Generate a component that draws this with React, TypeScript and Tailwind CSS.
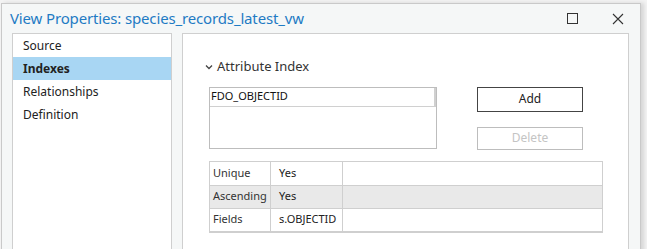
export default function App() {
  const font = { fontFamily: '"Noto Sans", "Open Sans", sans-serif' }
  const items = ['Source', 'Indexes', 'Relationships', 'Definition']
  const rows = [
    { label: 'Unique', value: 'Yes', alt: false },
    { label: 'Ascending', value: 'Yes', alt: true },
    { label: 'Fields', value: 's.OBJECTID', alt: false },
  ]

  return (
    <div className="h-[249px] w-[647px] overflow-hidden bg-[#f3f3f3] pl-[1px] pt-[3px]" style={font}>
      <div className="flex h-[260px] w-[640px] flex-col border border-[#c9c9c9] bg-[#f5f7f7] shadow-[3px_0_4px_rgba(0,0,0,0.12)]">
        {/* title bar */}
        <div className="flex h-[29px] items-center pl-[8px] pr-[16px]">
          <div className="flex-1 text-[15px] leading-none tracking-[-0.15px] text-[#1f7bc4]">
            View Properties: species_records_latest_vw
          </div>
          <div className="mr-[34px] h-[11px] w-[11px] border border-[#333]" />
          <svg width="12" height="12" viewBox="0 0 12 12" className="mt-[1px]">
            <path d="M1 1L11 11M11 1L1 11" stroke="#333" strokeWidth="1.1" />
          </svg>
        </div>

        <div className="flex flex-1 gap-[10px] pl-[10px]">
          {/* left nav */}
          <div className="w-[160px] border border-[#cfcfcf] bg-white">
            {items.map((it) => (
              <div
                key={it}
                className={
                  'flex h-[23px] items-center pl-[10px] text-[12px] text-[#222] ' +
                  (it === 'Indexes' ? 'bg-[#a8d6f3] font-bold' : '')
                }
              >
                {it}
              </div>
            ))}
          </div>

          {/* right panel */}
          <div className="w-[447px] border border-[#cfcfcf] bg-white pl-[26px] pt-[23px]">
            <div className="flex items-center gap-[4px] text-[13px] text-[#333]">
              <svg width="8" height="6" viewBox="0 0 8 6" className="-ml-[4px]">
                <path d="M1 1.5L4 4.5L7 1.5" stroke="#444" strokeWidth="1.3" fill="none" />
              </svg>
              <span>Attribute Index</span>
            </div>

            <div className="mt-[10px] flex">
              <div className="h-[62px] w-[228px] border border-[#bdbdbd]">
                <div className="flex h-[19px] items-center border-b border-r-2 border-[#d0d0d0] pl-[1px] text-[11px] text-[#111]">
                  FDO_OBJECTID
                </div>
              </div>
              <div className="ml-[40px] flex w-[106px] flex-col gap-[15px]">
                <button className="h-[25px] border border-[#444] text-[12px] text-[#222]">Add</button>
                <button className="h-[23px] border border-[#bdbdbd] text-[12px] text-[#c4c4c4]">Delete</button>
              </div>
            </div>

            <div className="mt-[11px] w-[394px] border border-b-2 border-[#cfcfcf] text-[11px] text-[#222]">
              {rows.map((r, i) => (
                <div
                  key={r.label}
                  className={
                    'flex h-[23px] ' +
                    (i > 0 ? 'border-t border-[#cfcfcf] ' : '') +
                    (r.alt ? 'bg-[#e9e9e9]' : 'bg-white')
                  }
                >
                  <div className="flex w-[61px] items-center border-r border-[#cfcfcf] pl-[3px] text-[#333]">{r.label}</div>
                  <div className="flex w-[72px] items-center border-r border-[#cfcfcf] pl-[8px]">{r.value}</div>
                  <div className="flex-1" />
                </div>
              ))}
            </div>
          </div>
        </div>
      </div>
    </div>
  )
}
